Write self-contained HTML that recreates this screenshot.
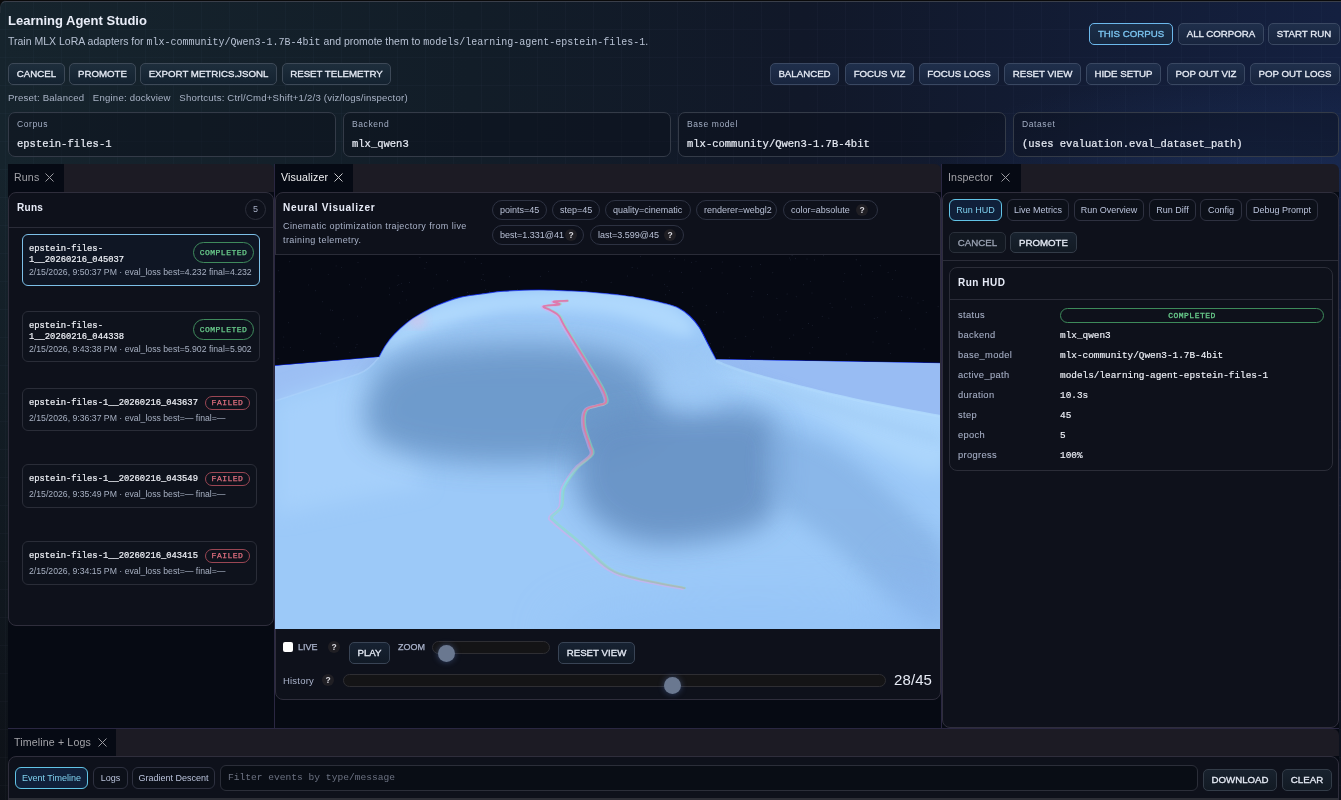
<!DOCTYPE html>
<html><head><meta charset="utf-8">
<style>
*{box-sizing:border-box;margin:0;padding:0}
html,body{width:1341px;height:800px;overflow:hidden;background:#0a0a0b;font-family:"Liberation Sans",sans-serif;color:#dfe5f2}
.abs{position:absolute}
#app{position:absolute;left:0;top:0;width:1341px;height:800px;border-top-left-radius:7px;overflow:hidden;
 background:
  linear-gradient(180deg, rgba(10,12,18,0) 0%, rgba(10,12,18,0) 20%, rgba(12,14,20,.85) 100%),
  radial-gradient(ellipse 320px 90px at 1250px 165px, rgba(40,70,130,.28), rgba(40,70,130,0)),
  linear-gradient(90deg,#16242d 0%,#121d28 35%,#111829 60%,#142040 100%);}
#grid{position:absolute;inset:0;background-image:
  linear-gradient(90deg,rgba(150,180,220,.028) 1px,transparent 1px),
  linear-gradient(180deg,rgba(150,180,220,.028) 1px,transparent 1px);
  background-size:28px 28px;background-position:5px 1px}
.title{position:absolute;left:8px;top:13px;font-weight:bold;font-size:13px;color:#e9edf8;letter-spacing:0}
.sub{position:absolute;left:8px;top:35px;font-size:10.5px;color:#b6c0d2;white-space:pre}
.mono{font-family:"Liberation Mono",monospace}
.btn{position:absolute;height:22px;border:1px solid #3d4957;border-radius:5px;background:linear-gradient(180deg,#1e2e3c,#142230);
 color:#e6ebf5;font-size:9.7px;-webkit-text-stroke:.3px currentColor;line-height:20px;text-align:center;white-space:nowrap;letter-spacing:0}
.btn.nv{background:linear-gradient(180deg,#1f2f4b,#18253e);border-color:#3a4862}
.btn.sel{border-color:#6cb8ec;color:#7cc6f2;background:linear-gradient(180deg,#1b2e48,#16263e)}
.meta{position:absolute;left:8px;top:92px;font-size:9.6px;color:#a9b3c6;white-space:pre;letter-spacing:.2px}
.field{position:absolute;top:112px;height:45px;border:1px solid #343b48;border-radius:7px;background:rgba(10,15,26,.45)}
.field .lbl{position:absolute;left:8px;top:6px;font-size:8.5px;color:#a3aec4;letter-spacing:.6px}
.field .val{position:absolute;left:8px;top:24.5px;font-family:"Liberation Mono",monospace;font-size:10.5px;color:#e6eaf3;-webkit-text-stroke:.2px currentColor}

.tabbar{position:absolute;height:28px;background:#1c1b24;border-top-right-radius:6px}
.tab{position:absolute;top:0;height:28px;background:#060a14;font-size:10.6px;color:#a3a3a8;letter-spacing:.15px;white-space:nowrap}
.tab span{position:absolute;left:6px;top:6.5px}
.tab.act{color:#f2f2f4}
.xic{position:absolute;top:9px;width:9px;height:9px}
.sash{position:absolute;background:#2a2742}
.card{position:absolute;background:#0e111b;border:1px solid #2f2e3c;border-radius:8px}
.dockbg{position:absolute;background:#060a13}
.hdrttl{position:absolute;font-weight:bold;font-size:10px;color:#e8ecf8;letter-spacing:.7px}
.divh{position:absolute;height:1px;background:#2a2c38}
.item{position:absolute;border:1px solid #2a2d38;border-radius:6px;background:#0e121c}
.item.sel{border-color:#7dc0e8;background:#0f1624}
.iname{position:absolute;left:6px;font-family:"Liberation Mono",monospace;font-size:8.8px;color:#eef0f6;line-height:11px;-webkit-text-stroke:.2px currentColor;white-space:pre}
.idate{position:absolute;left:6px;font-size:8.7px;color:#a7b0c2;white-space:pre}
.badge{position:absolute;height:21px;border:1px solid #3f8a5c;border-radius:11px;font-family:"Liberation Mono",monospace;font-size:8px;letter-spacing:.5px;color:#6bd08e;text-align:center;line-height:19px;-webkit-text-stroke:.25px currentColor}
.badge.f{height:14px;border-color:#9a4653;color:#e06f7f;line-height:12px;border-radius:8px}
.pill{position:absolute;height:20px;border:1px solid #2d3242;border-radius:10px;font-size:9px;color:#b9c1d6;line-height:18px;white-space:nowrap;padding-left:7px}
.q{position:absolute;width:12px;height:12px;border-radius:6px;background:#201f24;color:#d8d8de;font-size:8.5px;font-weight:bold;text-align:center;line-height:12px}
.itab{position:absolute;top:199px;height:22px;border:1px solid #2e3140;border-radius:6px;font-size:9px;color:#b9c2da;text-align:center;line-height:20px;white-space:nowrap;background:#0c1019}
.itab.sel{border-color:#62c4e6;color:#7fd0ee;background:#10203a}
.hl{position:absolute;left:958px;font-size:9.3px;color:#a4adc3;letter-spacing:.35px;-webkit-text-stroke:.1px currentColor}
.hv{position:absolute;left:1060px;font-family:"Liberation Mono",monospace;font-size:9.4px;color:#eef1f8;-webkit-text-stroke:.15px currentColor}
</style></head><body>
<div id="app" style="will-change:transform"><div id="grid"></div><div class="abs" style="left:0;top:0;width:1341px;height:1px;background:#0a0a0b"></div><div class="abs" style="left:0;top:1px;width:1341px;height:12px;border-top:1px solid #3a3f4a;border-left:1px solid rgba(58,63,74,.35);border-top-left-radius:6px"></div>
<div class="title">Learning Agent Studio</div>
<div class="sub">Train MLX LoRA adapters for <span class="mono" style="font-size:10px">mlx-community/Qwen3-1.7B-4bit</span> and promote them to <span class="mono" style="font-size:10px">models/learning-agent-epstein-files-1</span>.</div>

<div class="btn nv sel" style="left:1089px;top:23px;width:84px">THIS CORPUS</div>
<div class="btn nv" style="left:1178px;top:23px;width:86px">ALL CORPORA</div>
<div class="btn nv" style="left:1268px;top:23px;width:72px">START RUN</div>

<div class="btn" style="left:8px;top:63px;width:57px">CANCEL</div>
<div class="btn" style="left:69px;top:63px;width:67px">PROMOTE</div>
<div class="btn" style="left:140px;top:63px;width:137px">EXPORT METRICS.JSONL</div>
<div class="btn" style="left:282px;top:63px;width:109px">RESET TELEMETRY</div>

<div class="btn nv" style="left:770px;top:63px;width:69px">BALANCED</div>
<div class="btn nv" style="left:845px;top:63px;width:69px">FOCUS VIZ</div>
<div class="btn nv" style="left:919px;top:63px;width:80px">FOCUS LOGS</div>
<div class="btn nv" style="left:1004px;top:63px;width:77px">RESET VIEW</div>
<div class="btn nv" style="left:1086px;top:63px;width:75px">HIDE SETUP</div>
<div class="btn nv" style="left:1167px;top:63px;width:78px">POP OUT VIZ</div>
<div class="btn nv" style="left:1250px;top:63px;width:90px">POP OUT LOGS</div>

<div class="meta">Preset: Balanced   Engine: dockview   Shortcuts: Ctrl/Cmd+Shift+1/2/3 (viz/logs/inspector)</div>

<div class="field" style="left:8px;width:328px"><div class="lbl">Corpus</div><div class="val">epstein-files-1</div></div>
<div class="field" style="left:343px;width:328px"><div class="lbl">Backend</div><div class="val">mlx_qwen3</div></div>
<div class="field" style="left:678px;width:328px"><div class="lbl">Base model</div><div class="val">mlx-community/Qwen3-1.7B-4bit</div></div>
<div class="field" style="left:1013px;width:326px"><div class="lbl">Dataset</div><div class="val">(uses evaluation.eval_dataset_path)</div></div>

<!-- DOCK -->

<!-- dock bg -->
<div class="dockbg" style="left:8px;top:192px;width:1331px;height:608px"></div>
<!-- Runs group -->
<div class="tabbar" style="left:8px;top:164px;width:266px"></div>
<div class="tab" style="left:8px;top:164px;width:56px"><span>Runs</span><svg class="xic" style="left:37px" viewBox="0 0 9 9"><path d="M0.5 0.5L8.5 8.5M8.5 0.5L0.5 8.5" stroke="#9a9aa0" stroke-width="1"/></svg></div>
<div class="card" style="left:8px;top:192px;width:266px;height:434px;border-bottom-left-radius:8px"></div>
<div class="hdrttl" style="left:17px;top:202px;letter-spacing:.3px">Runs</div>
<div class="abs" style="left:245px;top:199px;width:21px;height:21px;border:1px solid #2c2f3b;border-radius:50%;font-size:9px;color:#a6aec4;text-align:center;line-height:19px">5</div>
<div class="divh" style="left:9px;top:227px;width:264px"></div>

<div class="item sel" style="left:22px;top:234px;width:238px;height:52px"><div class="iname" style="top:9px">epstein-files-
1__20260216_045037</div><div class="idate" style="top:32px">2/15/2026, 9:50:37 PM · eval_loss best=4.232 final=4.232</div>
<div class="badge" style="left:170px;top:7px;width:61px">COMPLETED</div></div>

<div class="item" style="left:22px;top:311px;width:238px;height:51px"><div class="iname" style="top:9px">epstein-files-
1__20260216_044338</div><div class="idate" style="top:32px">2/15/2026, 9:43:38 PM · eval_loss best=5.902 final=5.902</div>
<div class="badge" style="left:170px;top:7px;width:61px">COMPLETED</div></div>

<div class="item" style="left:22px;top:388px;width:235px;height:43px"><div class="iname" style="top:9px">epstein-files-1__20260216_043637</div><div class="idate" style="top:24px">2/15/2026, 9:36:37 PM · eval_loss best=— final=—</div>
<div class="badge f" style="left:182px;top:7px;width:45px">FAILED</div></div>

<div class="item" style="left:22px;top:464px;width:235px;height:44px"><div class="iname" style="top:9px">epstein-files-1__20260216_043549</div><div class="idate" style="top:24px">2/15/2026, 9:35:49 PM · eval_loss best=— final=—</div>
<div class="badge f" style="left:182px;top:7px;width:45px">FAILED</div></div>

<div class="item" style="left:22px;top:541px;width:235px;height:44px"><div class="iname" style="top:9px">epstein-files-1__20260216_043415</div><div class="idate" style="top:24px">2/15/2026, 9:34:15 PM · eval_loss best=— final=—</div>
<div class="badge f" style="left:182px;top:7px;width:45px">FAILED</div></div>

<div class="sash" style="left:274px;top:164px;width:1px;height:564px"></div>

<!-- Visualizer group -->
<div class="tabbar" style="left:275px;top:164px;width:666px"></div>
<div class="tab act" style="left:275px;top:164px;width:78px"><span>Visualizer</span><svg class="xic" style="left:59px" viewBox="0 0 9 9"><path d="M0.5 0.5L8.5 8.5M8.5 0.5L0.5 8.5" stroke="#c8c8cc" stroke-width="1"/></svg></div>
<div class="card" style="left:275px;top:192px;width:666px;height:508px"></div>
<div class="hdrttl" style="left:283px;top:202px">Neural Visualizer</div>
<div class="abs" style="left:283px;top:219px;font-size:9px;letter-spacing:.4px;color:#a9b2c8;line-height:14px;width:200px">Cinematic optimization trajectory from live training telemetry.</div>
<div class="pill" style="left:492px;top:200px;width:55px">points=45</div>
<div class="pill" style="left:552px;top:200px;width:48px">step=45</div>
<div class="pill" style="left:605px;top:200px;width:86px">quality=cinematic</div>
<div class="pill" style="left:696px;top:200px;width:81px">renderer=webgl2</div>
<div class="pill" style="left:783px;top:200px;width:95px">color=absolute<div class="q" style="left:72px;top:3px">?</div></div>
<div class="pill" style="left:492px;top:225px;width:92px">best=1.331@41<div class="q" style="left:72px;top:3px">?</div></div>
<div class="pill" style="left:590px;top:225px;width:94px">last=3.599@45<div class="q" style="left:73px;top:3px">?</div></div>
<div class="divh" style="left:276px;top:254px;width:664px"></div>
<div id="canvas" class="abs" style="left:275px;top:255px;width:665px;height:374px;background:#060913;overflow:hidden"><svg width="666" height="374" viewBox="0 0 666 374" style="position:absolute;left:0;top:0">
<defs>
<filter id="b6" x="-50%" y="-50%" width="200%" height="200%"><feGaussianBlur stdDeviation="6"/></filter>
<filter id="b10" x="-50%" y="-50%" width="200%" height="200%"><feGaussianBlur stdDeviation="10"/></filter>
<filter id="b12" x="-50%" y="-50%" width="200%" height="200%"><feGaussianBlur stdDeviation="12"/></filter>
<filter id="b14" x="-50%" y="-50%" width="200%" height="200%"><feGaussianBlur stdDeviation="14"/></filter>
<filter id="b16" x="-50%" y="-50%" width="200%" height="200%"><feGaussianBlur stdDeviation="16"/></filter>
<filter id="b24" x="-50%" y="-50%" width="200%" height="200%"><feGaussianBlur stdDeviation="24"/></filter>
<filter id="b1"><feGaussianBlur stdDeviation="0.6"/></filter>
<linearGradient id="trg" x1="0" y1="0" x2="0" y2="1">
 <stop offset="0" stop-color="#e86aa8"/><stop offset="0.5" stop-color="#e07a9e"/><stop offset="0.62" stop-color="#86dce8"/><stop offset="0.85" stop-color="#92d0dc"/><stop offset="1" stop-color="#aab4b8"/>
</linearGradient>
<clipPath id="tc"><path d="M0,110.7 L104,102  C105.1,100.0 108.1,94.0 110.7,90.2 C113.3,86.4 116.1,82.8 119.7,79.0 C123.3,75.2 127.8,71.1 132.1,67.7 C136.4,64.3 140.5,61.6 145.6,58.7 C150.7,55.8 155.9,53.0 162.5,50.3 C169.1,47.6 177.9,44.2 185.0,42.4 C192.1,40.6 197.7,40.3 205.0,39.3 C212.3,38.3 219.1,37.0 228.9,36.3 C238.7,35.6 252.1,35.0 264.0,35.0 C275.9,35.0 290.4,35.8 300.5,36.3 C310.6,36.8 316.4,37.4 324.3,38.1 C332.2,38.8 341.0,39.6 348.2,40.5 C355.4,41.4 360.5,42.2 367.5,43.6 C374.5,45.0 384.0,47.0 390.0,48.6 C396.0,50.2 399.4,50.9 403.5,53.0 C407.6,55.1 411.3,57.8 414.7,61.0 C418.1,64.2 421.1,67.7 424.0,72.0 C426.9,76.3 429.2,81.6 432.0,87.0 C434.8,92.4 439.5,101.6 441.0,104.5 L666,108.2 L666,374 L0,374 Z"/></clipPath>
</defs>
<rect width="666" height="374" fill="#060913"/>
<circle cx="158.5" cy="59.9" r="0.45" fill="#2a3044" /><circle cx="246.4" cy="66.4" r="0.45" fill="#2a3044" /><circle cx="416.7" cy="7.2" r="0.45" fill="#2a3044" /><circle cx="8.8" cy="92.1" r="0.45" fill="#2a3044" /><circle cx="172.7" cy="25.8" r="0.45" fill="#2a3044" /><circle cx="663.1" cy="51.7" r="0.45" fill="#2a3044" /><circle cx="557.1" cy="52.4" r="0.45" fill="#2a3044" /><circle cx="425.6" cy="16.6" r="0.45" fill="#2a3044" /><circle cx="422.8" cy="95.5" r="0.45" fill="#2a3044" /><circle cx="348.4" cy="81.5" r="0.45" fill="#2a3044" /><circle cx="447.2" cy="7.0" r="0.45" fill="#2a3044" /><circle cx="505.0" cy="65.0" r="0.45" fill="#2a3044" /><circle cx="200.6" cy="3.4" r="0.45" fill="#2a3044" /><circle cx="576.4" cy="52.0" r="0.45" fill="#2a3044" /><circle cx="478.7" cy="96.7" r="0.45" fill="#2a3044" /><circle cx="475.6" cy="101.3" r="0.45" fill="#2a3044" /><circle cx="263.0" cy="88.1" r="0.45" fill="#2a3044" /><circle cx="296.1" cy="102.9" r="0.45" fill="#2a3044" /><circle cx="585.3" cy="10.7" r="0.45" fill="#2a3044" /><circle cx="90.6" cy="23.9" r="0.45" fill="#2a3044" /><circle cx="643.0" cy="48.0" r="0.45" fill="#2a3044" /><circle cx="417.3" cy="33.1" r="0.45" fill="#2a3044" /><circle cx="337.8" cy="42.4" r="0.45" fill="#2a3044" /><circle cx="233.7" cy="64.4" r="0.45" fill="#2a3044" /><circle cx="389.1" cy="99.5" r="0.45" fill="#2a3044" /><circle cx="454.2" cy="102.2" r="0.45" fill="#2a3044" /><circle cx="570.4" cy="109.0" r="0.45" fill="#2a3044" /><circle cx="447.1" cy="17.9" r="0.45" fill="#2a3044" /><circle cx="573.2" cy="106.1" r="0.45" fill="#2a3044" /><circle cx="602.5" cy="62.6" r="0.45" fill="#2a3044" /><circle cx="475.4" cy="23.2" r="0.45" fill="#2a3044" /><circle cx="553.9" cy="63.1" r="0.45" fill="#2a3044" /><circle cx="189.8" cy="7.0" r="0.45" fill="#2a3044" /><circle cx="568.7" cy="108.9" r="0.45" fill="#2a3044" /><circle cx="59.0" cy="88.1" r="0.45" fill="#2a3044" /><circle cx="273.4" cy="16.6" r="0.45" fill="#2a3044" /><circle cx="195.7" cy="84.6" r="0.45" fill="#2a3044" /><circle cx="581.3" cy="4.9" r="0.45" fill="#2a3044" /><circle cx="409.3" cy="4.9" r="0.45" fill="#2a3044" /><circle cx="478.5" cy="36.4" r="0.45" fill="#2a3044" /><circle cx="586.7" cy="107.9" r="0.45" fill="#2a3044" /><circle cx="336.6" cy="109.8" r="0.45" fill="#2a3044" /><circle cx="206.2" cy="8.5" r="0.45" fill="#2a3044" /><circle cx="399.4" cy="3.5" r="0.45" fill="#2a3044" /><circle cx="131.5" cy="44.9" r="0.45" fill="#2a3044" /><circle cx="406.6" cy="17.2" r="0.45" fill="#2a3044" /><circle cx="28.3" cy="95.5" r="0.45" fill="#2a3044" /><circle cx="209.0" cy="105.5" r="0.45" fill="#2a3044" /><circle cx="597.2" cy="41.6" r="0.45" fill="#2a3044" /><circle cx="306.6" cy="57.2" r="0.45" fill="#2a3044" /><circle cx="428.8" cy="65.5" r="0.45" fill="#2a3044" /><circle cx="372.5" cy="68.2" r="0.45" fill="#2a3044" /><circle cx="626.5" cy="55.8" r="0.45" fill="#2a3044" /><circle cx="287.2" cy="79.2" r="0.45" fill="#2a3044" /><circle cx="158.3" cy="33.1" r="0.45" fill="#2a3044" /><circle cx="651.2" cy="57.3" r="0.45" fill="#2a3044" /><circle cx="365.3" cy="1.3" r="0.45" fill="#2a3044" /><circle cx="276.5" cy="63.8" r="0.45" fill="#2a3044" /><circle cx="13.4" cy="67.7" r="0.45" fill="#2a3044" /><circle cx="421.0" cy="6.6" r="0.45" fill="#2a3044" /><circle cx="417.8" cy="51.3" r="0.45" fill="#2a3044" /><circle cx="452.4" cy="38.8" r="0.45" fill="#2a3044" /><circle cx="470.8" cy="81.2" r="0.45" fill="#2a3044" /><circle cx="14.8" cy="6.7" r="0.45" fill="#2a3044" /><circle cx="450.2" cy="106.0" r="0.45" fill="#2a3044" /><circle cx="167.2" cy="50.2" r="0.45" fill="#2a3044" /><circle cx="394.7" cy="35.2" r="0.45" fill="#2a3044" /><circle cx="242.4" cy="34.4" r="0.45" fill="#2a3044" /><circle cx="245.9" cy="65.5" r="0.45" fill="#2a3044" /><circle cx="200.1" cy="41.5" r="0.45" fill="#2a3044" /><circle cx="514.3" cy="3.0" r="0.45" fill="#2a3044" /><circle cx="379.1" cy="80.9" r="0.45" fill="#2a3044" /><circle cx="206.5" cy="24.5" r="0.45" fill="#2a3044" /><circle cx="535.3" cy="26.3" r="0.45" fill="#2a3044" /><circle cx="124.8" cy="47.9" r="0.45" fill="#2a3044" /><circle cx="464.9" cy="11.2" r="0.45" fill="#2a3044" /><circle cx="214.4" cy="36.7" r="0.45" fill="#2a3044" /><circle cx="555.1" cy="48.2" r="0.45" fill="#2a3044" /><circle cx="569.8" cy="18.6" r="0.45" fill="#2a3044" /><circle cx="224.2" cy="71.5" r="0.45" fill="#2a3044" /><circle cx="589.3" cy="49.6" r="0.45" fill="#2a3044" /><circle cx="149.9" cy="13.3" r="0.45" fill="#2a3044" /><circle cx="352.7" cy="21.0" r="0.45" fill="#2a3044" /><circle cx="537.3" cy="92.2" r="0.45" fill="#2a3044" /><circle cx="122.3" cy="30.6" r="0.45" fill="#2a3044" /><circle cx="537.6" cy="70.6" r="0.45" fill="#2a3044" /><circle cx="537.0" cy="38.0" r="0.45" fill="#2a3044" /><circle cx="86.4" cy="32.1" r="0.45" fill="#2a3044" /><circle cx="528.7" cy="29.8" r="0.45" fill="#2a3044" /><circle cx="230.7" cy="45.9" r="0.45" fill="#2a3044" /><circle cx="279.6" cy="45.0" r="0.45" fill="#2a3044" /><circle cx="613.1" cy="17.2" r="0.45" fill="#2a3044" /><circle cx="3.1" cy="103.8" r="0.45" fill="#2a3044" /><circle cx="586.1" cy="108.6" r="0.45" fill="#2a3044" /><circle cx="289.3" cy="104.5" r="0.45" fill="#2a3044" /><circle cx="617.6" cy="24.4" r="0.45" fill="#2a3044" /><circle cx="496.5" cy="92.0" r="0.45" fill="#2a3044" /><circle cx="441.5" cy="57.1" r="0.45" fill="#2a3044" /><circle cx="192.5" cy="37.5" r="0.45" fill="#2a3044" /><circle cx="151.5" cy="7.5" r="0.45" fill="#2a3044" /><circle cx="392.1" cy="31.6" r="0.45" fill="#2a3044" /><circle cx="539.6" cy="5.0" r="0.45" fill="#2a3044" /><circle cx="601.8" cy="76.3" r="0.45" fill="#2a3044" /><circle cx="615.3" cy="98.6" r="0.45" fill="#2a3044" /><circle cx="599.2" cy="63.5" r="0.45" fill="#2a3044" /><circle cx="8.8" cy="82.0" r="0.45" fill="#2a3044" /><circle cx="114.4" cy="33.0" r="0.45" fill="#2a3044" /><circle cx="441.5" cy="57.7" r="0.45" fill="#2a3044" /><circle cx="275.6" cy="103.3" r="0.45" fill="#2a3044" /><circle cx="407.7" cy="37.5" r="0.45" fill="#2a3044" /><circle cx="168.1" cy="94.8" r="0.45" fill="#2a3044" /><circle cx="317.8" cy="86.1" r="0.45" fill="#2a3044" /><circle cx="234.3" cy="21.7" r="0.45" fill="#2a3044" /><circle cx="356.1" cy="89.8" r="0.45" fill="#2a3044" /><circle cx="114.1" cy="87.1" r="0.45" fill="#2a3044" /><circle cx="613.9" cy="88.7" r="0.45" fill="#2a3044" /><circle cx="548.5" cy="0.8" r="0.45" fill="#2a3044" /><circle cx="418.7" cy="94.9" r="0.45" fill="#2a3044" /><circle cx="33.3" cy="29.9" r="0.45" fill="#2a3044" /><circle cx="178.9" cy="58.0" r="0.45" fill="#2a3044" /><circle cx="281.7" cy="52.0" r="0.45" fill="#2a3044" /><circle cx="517.1" cy="0.2" r="0.45" fill="#2a3044" /><circle cx="36.5" cy="14.0" r="0.45" fill="#2a3044" /><circle cx="83.0" cy="7.5" r="0.45" fill="#2a3044" /><circle cx="649.1" cy="94.0" r="0.45" fill="#2a3044" /><circle cx="57.4" cy="55.2" r="0.45" fill="#2a3044" /><circle cx="210.4" cy="34.6" r="0.45" fill="#2a3044" /><circle cx="234.0" cy="71.2" r="0.45" fill="#2a3044" /><circle cx="390.7" cy="39.7" r="0.45" fill="#2a3044" /><circle cx="127.3" cy="36.2" r="0.45" fill="#2a3044" /><circle cx="82.4" cy="61.1" r="0.45" fill="#2a3044" /><circle cx="476.9" cy="41.8" r="0.45" fill="#2a3044" /><circle cx="53.2" cy="19.6" r="0.45" fill="#2a3044" /><circle cx="248.6" cy="66.5" r="0.45" fill="#2a3044" /><circle cx="521.2" cy="41.8" r="0.45" fill="#2a3044" /><circle cx="533.6" cy="68.5" r="0.45" fill="#2a3044" /><circle cx="287.4" cy="41.0" r="0.45" fill="#2a3044" /><circle cx="330.4" cy="77.3" r="0.45" fill="#2a3044" /><circle cx="280.1" cy="76.4" r="0.45" fill="#2a3044" /><circle cx="306.9" cy="27.0" r="0.45" fill="#2a3044" /><circle cx="356.9" cy="76.5" r="0.45" fill="#2a3044" /><circle cx="47.7" cy="46.7" r="0.45" fill="#2a3044" /><circle cx="283.6" cy="96.8" r="0.45" fill="#2a3044" /><circle cx="623.7" cy="41.2" r="0.45" fill="#2a3044" /><circle cx="598.0" cy="87.0" r="0.45" fill="#2a3044" /><circle cx="174.6" cy="51.1" r="0.45" fill="#2a3044" /><circle cx="82.0" cy="89.5" r="0.45" fill="#2a3044" /><circle cx="441.1" cy="97.6" r="0.45" fill="#2a3044" /><circle cx="527.8" cy="73.4" r="0.45" fill="#2a3044" /><circle cx="488.7" cy="62.0" r="0.45" fill="#2a3044" /><circle cx="68.7" cy="64.7" r="0.45" fill="#2a3044" /><circle cx="3.3" cy="15.8" r="0.45" fill="#2a3044" /><circle cx="515.7" cy="4.9" r="0.45" fill="#2a3044" /><circle cx="61.1" cy="10.9" r="0.45" fill="#2a3044" /><circle cx="586.4" cy="19.7" r="0.45" fill="#2a3044" /><circle cx="15.6" cy="92.6" r="0.45" fill="#2a3044" /><circle cx="80.8" cy="92.8" r="0.45" fill="#2a3044" /><circle cx="448.6" cy="92.0" r="0.45" fill="#2a3044" /><circle cx="634.3" cy="63.7" r="0.45" fill="#2a3044" /><circle cx="532.0" cy="4.0" r="0.45" fill="#2a3044" /><circle cx="511.1" cy="56.2" r="0.45" fill="#2a3044" /><circle cx="476.3" cy="11.7" r="0.45" fill="#2a3044" /><circle cx="498.8" cy="102.8" r="0.45" fill="#2a3044" /><circle cx="40.7" cy="35.7" r="0.45" fill="#2a3044" /><circle cx="375.6" cy="91.1" r="0.45" fill="#2a3044" /><circle cx="161.3" cy="19.8" r="0.45" fill="#2a3044" /><circle cx="166.5" cy="67.8" r="0.45" fill="#2a3044" /><circle cx="501.9" cy="43.3" r="0.45" fill="#2a3044" /><circle cx="244.7" cy="43.6" r="0.45" fill="#2a3044" /><circle cx="233.3" cy="46.0" r="0.45" fill="#2a3044" /><circle cx="55.5" cy="55.0" r="0.45" fill="#2a3044" /><circle cx="648.1" cy="45.4" r="0.45" fill="#2a3044" /><circle cx="497.8" cy="17.7" r="0.45" fill="#2a3044" /><circle cx="460.1" cy="83.2" r="0.45" fill="#2a3044" /><circle cx="448.8" cy="56.9" r="0.45" fill="#2a3044" /><circle cx="322.2" cy="70.7" r="0.45" fill="#2a3044" /><circle cx="597.7" cy="16.4" r="0.45" fill="#2a3044" /><circle cx="63.8" cy="82.3" r="0.45" fill="#2a3044" /><circle cx="610.5" cy="56.9" r="0.45" fill="#2a3044" /><circle cx="295.1" cy="79.1" r="0.45" fill="#2a3044" /><circle cx="123.9" cy="29.4" r="0.45" fill="#2a3044" /><circle cx="132.7" cy="64.4" r="0.45" fill="#2a3044" /><circle cx="209.7" cy="25.6" r="0.45" fill="#2a3044" /><circle cx="460.3" cy="104.9" r="0.45" fill="#2a3044" /><circle cx="197.0" cy="77.6" r="0.45" fill="#2a3044" /><circle cx="275.2" cy="93.9" r="0.45" fill="#2a3044" /><circle cx="389.4" cy="29.4" r="0.45" fill="#2a3044" /><circle cx="144.9" cy="2.5" r="0.45" fill="#2a3044" /><circle cx="319.3" cy="42.1" r="0.45" fill="#2a3044" /><circle cx="114.7" cy="39.7" r="0.45" fill="#2a3044" /><circle cx="214.5" cy="85.2" r="0.45" fill="#2a3044" /><circle cx="95.6" cy="109.0" r="0.45" fill="#2a3044" /><circle cx="319.4" cy="65.9" r="0.45" fill="#2a3044" /><circle cx="311.7" cy="91.8" r="0.45" fill="#2a3044" /><circle cx="547.2" cy="61.3" r="0.45" fill="#2a3044" /><circle cx="320.5" cy="79.3" r="0.45" fill="#2a3044" /><circle cx="570.5" cy="44.0" r="0.45" fill="#2a3044" /><circle cx="488.6" cy="105.6" r="0.45" fill="#2a3044" /><circle cx="311.3" cy="25.3" r="0.45" fill="#2a3044" /><circle cx="156.4" cy="78.9" r="0.45" fill="#2a3044" /><circle cx="449.8" cy="105.5" r="0.45" fill="#2a3044" /><circle cx="568.7" cy="26.6" r="0.45" fill="#2a3044" /><circle cx="126.3" cy="28.4" r="0.45" fill="#2a3044" /><circle cx="124.7" cy="77.5" r="0.45" fill="#2a3044" /><circle cx="571.8" cy="99.0" r="0.45" fill="#2a3044" /><circle cx="169.8" cy="95.2" r="0.45" fill="#2a3044" /><circle cx="208.7" cy="46.6" r="0.45" fill="#2a3044" /><circle cx="485.5" cy="9.5" r="0.45" fill="#2a3044" /><circle cx="61.7" cy="91.7" r="0.45" fill="#2a3044" /><circle cx="194.3" cy="39.2" r="0.45" fill="#2a3044" /><circle cx="386.5" cy="74.3" r="0.45" fill="#2a3044" /><circle cx="4.6" cy="36.8" r="0.45" fill="#2a3044" /><circle cx="290.5" cy="53.4" r="0.45" fill="#2a3044" /><circle cx="139.9" cy="64.4" r="0.45" fill="#2a3044" /><circle cx="636.3" cy="43.0" r="0.45" fill="#2a3044" /><circle cx="362.5" cy="13.1" r="0.45" fill="#2a3044" /><circle cx="183.0" cy="73.2" r="0.45" fill="#2a3044" /><circle cx="74.9" cy="97.6" r="0.45" fill="#2a3044" /><circle cx="605.2" cy="10.7" r="0.45" fill="#2a3044" /><circle cx="626.9" cy="41.2" r="0.45" fill="#2a3044" /><circle cx="514.4" cy="83.3" r="0.45" fill="#2a3044" /><circle cx="196.8" cy="74.3" r="0.45" fill="#2a3044" /><circle cx="435.6" cy="88.7" r="0.45" fill="#2a3044" /><circle cx="176.9" cy="83.0" r="0.45" fill="#2a3044" /><circle cx="640.2" cy="74.0" r="0.45" fill="#2a3044" /><circle cx="357.1" cy="12.5" r="0.45" fill="#2a3044" /><circle cx="328.9" cy="38.7" r="0.45" fill="#2a3044" /><circle cx="478.3" cy="74.6" r="0.45" fill="#2a3044" /><circle cx="377.2" cy="20.0" r="0.45" fill="#2a3044" /><circle cx="430.0" cy="69.4" r="0.45" fill="#2a3044" /><circle cx="119.3" cy="97.9" r="0.45" fill="#2a3044" /><circle cx="436.5" cy="13.5" r="0.45" fill="#2a3044" /><circle cx="620.6" cy="15.6" r="0.45" fill="#2a3044" /><circle cx="220.8" cy="79.3" r="0.45" fill="#2a3044" /><circle cx="397.9" cy="61.0" r="0.45" fill="#2a3044" /><circle cx="431.2" cy="50.3" r="0.45" fill="#2a3044" /><circle cx="208.1" cy="19.4" r="0.45" fill="#2a3044" /><circle cx="45.7" cy="78.7" r="0.45" fill="#2a3044" /><circle cx="502.5" cy="59.7" r="0.45" fill="#2a3044" /><circle cx="492.6" cy="39.5" r="0.45" fill="#2a3044" /><circle cx="177.1" cy="42.2" r="0.45" fill="#2a3044" /><circle cx="581.1" cy="4.6" r="0.45" fill="#2a3044" /><circle cx="336.1" cy="27.2" r="0.45" fill="#2a3044" /><circle cx="512.1" cy="39.0" r="0.45" fill="#2a3044" /><circle cx="221.7" cy="44.4" r="0.45" fill="#2a3044" /><circle cx="360.6" cy="84.9" r="0.45" fill="#2a3044" /><circle cx="235.0" cy="93.2" r="0.45" fill="#2a3044" /><circle cx="74.7" cy="29.8" r="0.45" fill="#2a3044" /><circle cx="66.4" cy="12.4" r="0.45" fill="#2a3044" /><circle cx="518.8" cy="80.0" r="0.45" fill="#2a3044" /><circle cx="123.1" cy="20.8" r="0.45" fill="#2a3044" /><circle cx="277.5" cy="81.8" r="0.45" fill="#2a3044" /><circle cx="543.3" cy="82.4" r="0.45" fill="#2a3044" /><circle cx="394.2" cy="16.1" r="0.45" fill="#2a3044" /><circle cx="265.3" cy="21.3" r="0.45" fill="#2a3044" /><circle cx="351.4" cy="62.5" r="0.45" fill="#2a3044" /><circle cx="134.6" cy="27.5" r="0.45" fill="#2a3044" /><circle cx="520.6" cy="3.3" r="0.45" fill="#2a3044" /><circle cx="534.9" cy="98.0" r="0.45" fill="#2a3044" /><circle cx="632.2" cy="42.1" r="0.45" fill="#2a3044" />
<path d="M0,110.7 L104,102  C105.1,100.0 108.1,94.0 110.7,90.2 C113.3,86.4 116.1,82.8 119.7,79.0 C123.3,75.2 127.8,71.1 132.1,67.7 C136.4,64.3 140.5,61.6 145.6,58.7 C150.7,55.8 155.9,53.0 162.5,50.3 C169.1,47.6 177.9,44.2 185.0,42.4 C192.1,40.6 197.7,40.3 205.0,39.3 C212.3,38.3 219.1,37.0 228.9,36.3 C238.7,35.6 252.1,35.0 264.0,35.0 C275.9,35.0 290.4,35.8 300.5,36.3 C310.6,36.8 316.4,37.4 324.3,38.1 C332.2,38.8 341.0,39.6 348.2,40.5 C355.4,41.4 360.5,42.2 367.5,43.6 C374.5,45.0 384.0,47.0 390.0,48.6 C396.0,50.2 399.4,50.9 403.5,53.0 C407.6,55.1 411.3,57.8 414.7,61.0 C418.1,64.2 421.1,67.7 424.0,72.0 C426.9,76.3 429.2,81.6 432.0,87.0 C434.8,92.4 439.5,101.6 441.0,104.5 L666,108.2 L666,374 L0,374 Z" fill="#9cc9f8"/>
<path d="M0,110.7 L104,102  C105.1,100.0 108.1,94.0 110.7,90.2 C113.3,86.4 116.1,82.8 119.7,79.0 C123.3,75.2 127.8,71.1 132.1,67.7 C136.4,64.3 140.5,61.6 145.6,58.7 C150.7,55.8 155.9,53.0 162.5,50.3 C169.1,47.6 177.9,44.2 185.0,42.4 C192.1,40.6 197.7,40.3 205.0,39.3 C212.3,38.3 219.1,37.0 228.9,36.3 C238.7,35.6 252.1,35.0 264.0,35.0 C275.9,35.0 290.4,35.8 300.5,36.3 C310.6,36.8 316.4,37.4 324.3,38.1 C332.2,38.8 341.0,39.6 348.2,40.5 C355.4,41.4 360.5,42.2 367.5,43.6 C374.5,45.0 384.0,47.0 390.0,48.6 C396.0,50.2 399.4,50.9 403.5,53.0 C407.6,55.1 411.3,57.8 414.7,61.0 C418.1,64.2 421.1,67.7 424.0,72.0 C426.9,76.3 429.2,81.6 432.0,87.0 C434.8,92.4 439.5,101.6 441.0,104.5 L666,108.2" fill="none" stroke="#0a22e0" stroke-width="1.1"/>
<g clip-path="url(#tc)">
 <path d="M104,102 C150,70 250,60 441,104.5 L441,150 L104,150 Z" fill="#9ac4f1" filter="url(#b16)"/>
 <path d="M108.0,98.0 C104.7,96.3 118.0,76.7 130.0,68.0 C142.0,59.3 158.3,51.2 180.0,46.0 C201.7,40.8 233.3,38.5 260.0,37.0 C286.7,35.5 318.0,35.2 340.0,37.0 C362.0,38.8 379.0,42.2 392.0,48.0 C405.0,53.8 415.8,66.7 418.0,72.0 C420.2,77.3 419.7,82.3 405.0,80.0 C390.3,77.7 359.2,62.0 330.0,58.0 C300.8,54.0 260.0,52.7 230.0,56.0 C200.0,59.3 170.3,71.0 150.0,78.0 C129.7,85.0 111.3,99.7 108.0,98.0 Z" fill="#afd8fd" filter="url(#b6)"/>
 <path d="M445.0,108.0 C478.3,103.8 632.5,92.2 670.0,110.0 C707.5,127.8 680.0,200.0 670.0,215.0 C660.0,230.0 635.0,210.8 610.0,200.0 C585.0,189.2 543.3,160.8 520.0,150.0 C496.7,139.2 482.5,142.0 470.0,135.0 C457.5,128.0 411.7,112.2 445.0,108.0 Z" fill="#acd6fc" filter="url(#b10)"/>
 <path d="M441,104.5 L666,108.2 L666,160 C620,152 560,140 505,125 C470,116 452,110 441,104.5 Z" fill="#98bcf3" filter="url(#b1)"/>
 <path d="M441,106 C452,112 470,118 505,127 C560,142 620,154 666,162" stroke="#b2dafd" stroke-width="2" fill="none" filter="url(#b1)" opacity="0.7"/>
 <path d="M0,110.7 L104,102 C98,110 92,116 83,119 C55,128 25,138 0,146 Z" fill="#9cbff4" filter="url(#b1)"/>
 <path d="M83,119 C55,128 25,138 0,146 L0,260 L150,230 L110,130 Z" fill="#a6d0fb" filter="url(#b10)"/>
 <path d="M90.0,168.0 C87.0,156.5 91.7,136.3 100.0,125.0 C108.3,113.7 118.3,105.8 140.0,100.0 C161.7,94.2 203.3,91.3 230.0,90.0 C256.7,88.7 280.0,89.7 300.0,92.0 C320.0,94.3 337.0,97.3 350.0,104.0 C363.0,110.7 372.2,119.7 378.0,132.0 C383.8,144.3 393.0,166.3 385.0,178.0 C377.0,189.7 359.2,197.0 330.0,202.0 C300.8,207.0 245.3,209.3 210.0,208.0 C174.7,206.7 138.0,200.7 118.0,194.0 C98.0,187.3 93.0,179.5 90.0,168.0 Z" fill="#6a96c8" opacity="0.9" filter="url(#b14)"/>
 <path d="M318.0,168.0 C337.0,153.2 390.7,157.0 420.0,156.0 C449.3,155.0 480.2,150.0 494.0,162.0 C507.8,174.0 505.0,209.7 503.0,228.0 C501.0,246.3 503.8,262.0 482.0,272.0 C460.2,282.0 401.3,292.5 372.0,288.0 C342.7,283.5 315.0,265.0 306.0,245.0 C297.0,225.0 299.0,182.8 318.0,168.0 Z" fill="#6792c4" opacity="0.92" filter="url(#b14)"/>
 <ellipse cx="418" cy="128" rx="34" ry="22" fill="#9fcaf7" opacity="0.8" filter="url(#b12)"/>
 <path d="M500.0,178.0 C511.2,171.0 541.7,184.0 565.0,198.0 C588.3,212.0 622.5,245.0 640.0,262.0 C657.5,279.0 665.0,281.7 670.0,300.0 C675.0,318.3 677.5,363.3 670.0,372.0 C662.5,380.7 643.3,365.3 625.0,352.0 C606.7,338.7 581.2,310.7 560.0,292.0 C538.8,273.3 508.0,259.0 498.0,240.0 C488.0,221.0 488.8,185.0 500.0,178.0 Z" fill="#7ca8dc" opacity="0.55" filter="url(#b10)"/>
 <ellipse cx="650" cy="350" rx="40" ry="50" fill="#8ab6f2" opacity="0.4" filter="url(#b24)"/>
 <ellipse cx="480" cy="380" rx="200" ry="40" fill="#90c0f6" opacity="0.5" filter="url(#b24)"/>
 <path d="M104,102 C98,110 92,116 83,119 C55,128 25,138 0,146" stroke="#b0d6fc" stroke-width="1.5" fill="none" filter="url(#b1)" opacity="0.5"/>
 <path d="M441,105 C480,125 540,150 666,185" stroke="#88b2e6" stroke-width="3" fill="none" filter="url(#b6)" opacity="0.6"/>
 <ellipse cx="142" cy="66" rx="8" ry="5" fill="#f2b4dc" opacity="0.7" filter="url(#b6)"/>
</g>
<path d="M292.5,45.8 C290.2,45.9 279.8,45.9 278.5,46.5 C277.2,47.1 286.2,48.5 284.5,49.3 C282.8,50.1 269.9,50.3 268.5,51.3 C267.1,52.3 273.4,53.9 276.0,55.5 C278.6,57.1 281.7,58.2 284.0,61.0 C286.3,63.8 284.9,63.4 290.0,72.0 C295.1,80.6 308.3,101.8 314.7,112.4 C321.1,123.0 325.5,129.9 328.2,135.7 C330.9,141.5 332.0,144.9 331.0,147.3 C330.0,149.8 325.8,149.1 322.4,150.4 C319.0,151.7 313.0,151.6 310.8,155.0 C308.5,158.4 308.2,164.7 308.9,170.5 C309.5,176.3 313.4,185.1 314.7,189.9 C316.0,194.7 318.6,195.9 316.6,199.5 C314.6,203.1 306.5,207.6 303.0,211.2 C299.5,214.8 297.9,216.9 295.3,220.8 C292.7,224.7 289.2,229.2 287.6,234.4 C286.0,239.6 287.5,247.3 285.6,251.8 C283.7,256.3 277.0,258.9 276.0,261.5 C275.0,264.1 275.3,263.1 279.8,267.3 C284.3,271.5 294.0,278.9 303.0,286.6 C312.0,294.3 324.3,307.6 334.0,313.7 C343.7,319.8 348.5,320.2 361.1,323.4 C373.7,326.6 401.4,331.5 409.5,333.1" fill="none" stroke="#f0a0e8" stroke-width="3.2" opacity="0.45" transform="translate(-1,0.5)" filter="url(#b1)"/>
<path d="M292.5,45.8 C290.2,45.9 279.8,45.9 278.5,46.5 C277.2,47.1 286.2,48.5 284.5,49.3 C282.8,50.1 269.9,50.3 268.5,51.3 C267.1,52.3 273.4,53.9 276.0,55.5 C278.6,57.1 281.7,58.2 284.0,61.0 C286.3,63.8 284.9,63.4 290.0,72.0 C295.1,80.6 308.3,101.8 314.7,112.4 C321.1,123.0 325.5,129.9 328.2,135.7 C330.9,141.5 332.0,144.9 331.0,147.3 C330.0,149.8 325.8,149.1 322.4,150.4 C319.0,151.7 313.0,151.6 310.8,155.0 C308.5,158.4 308.2,164.7 308.9,170.5 C309.5,176.3 313.4,185.1 314.7,189.9 C316.0,194.7 318.6,195.9 316.6,199.5 C314.6,203.1 306.5,207.6 303.0,211.2 C299.5,214.8 297.9,216.9 295.3,220.8 C292.7,224.7 289.2,229.2 287.6,234.4 C286.0,239.6 287.5,247.3 285.6,251.8 C283.7,256.3 277.0,258.9 276.0,261.5 C275.0,264.1 275.3,263.1 279.8,267.3 C284.3,271.5 294.0,278.9 303.0,286.6 C312.0,294.3 324.3,307.6 334.0,313.7 C343.7,319.8 348.5,320.2 361.1,323.4 C373.7,326.6 401.4,331.5 409.5,333.1" fill="none" stroke="#8ee6b0" stroke-width="2.4" opacity="0.5" transform="translate(1.2,0)" filter="url(#b1)"/>
<path d="M292.5,45.8 C290.2,45.9 279.8,45.9 278.5,46.5 C277.2,47.1 286.2,48.5 284.5,49.3 C282.8,50.1 269.9,50.3 268.5,51.3 C267.1,52.3 273.4,53.9 276.0,55.5 C278.6,57.1 281.7,58.2 284.0,61.0 C286.3,63.8 284.9,63.4 290.0,72.0 C295.1,80.6 308.3,101.8 314.7,112.4 C321.1,123.0 325.5,129.9 328.2,135.7 C330.9,141.5 332.0,144.9 331.0,147.3 C330.0,149.8 325.8,149.1 322.4,150.4 C319.0,151.7 313.0,151.6 310.8,155.0 C308.5,158.4 308.2,164.7 308.9,170.5 C309.5,176.3 313.4,185.1 314.7,189.9 C316.0,194.7 318.6,195.9 316.6,199.5 C314.6,203.1 306.5,207.6 303.0,211.2 C299.5,214.8 297.9,216.9 295.3,220.8 C292.7,224.7 289.2,229.2 287.6,234.4 C286.0,239.6 287.5,247.3 285.6,251.8 C283.7,256.3 277.0,258.9 276.0,261.5 C275.0,264.1 275.3,263.1 279.8,267.3 C284.3,271.5 294.0,278.9 303.0,286.6 C312.0,294.3 324.3,307.6 334.0,313.7 C343.7,319.8 348.5,320.2 361.1,323.4 C373.7,326.6 401.4,331.5 409.5,333.1" fill="none" stroke="url(#trg)" stroke-width="1.9" stroke-linecap="round" stroke-linejoin="round" opacity="0.85"/>
</svg></div>

<!-- controls -->
<div class="abs" style="left:283px;top:642px;width:10px;height:10px;background:#fff;border-radius:2px"></div>
<div class="abs" style="left:298px;top:642px;font-size:9px;-webkit-text-stroke:.25px currentColor;color:#aab3cb">LIVE</div>
<div class="q" style="left:328px;top:641px">?</div>
<div class="btn" style="left:349px;top:642px;width:41px;height:22px;background:linear-gradient(180deg,#172232,#111a26);border-color:#394455">PLAY</div>
<div class="abs" style="left:398px;top:642px;font-size:9px;-webkit-text-stroke:.25px currentColor;color:#aab3cb">ZOOM</div>
<div class="abs" style="left:432px;top:641px;width:118px;height:13px;border:1px solid #2e2e33;border-radius:7px;background:#141416"></div>
<div class="abs" style="left:438px;top:645px;width:17px;height:17px;border-radius:50%;background:#6a7890;box-shadow:0 0 6px rgba(100,130,200,.45)"></div>
<div class="btn" style="left:558px;top:642px;width:77px;height:22px;background:linear-gradient(180deg,#172232,#111a26);border-color:#394455">RESET VIEW</div>
<div class="abs" style="left:283px;top:675px;font-size:9.5px;color:#aab3cb;letter-spacing:.2px">History</div>
<div class="q" style="left:322px;top:674px">?</div>
<div class="abs" style="left:343px;top:674px;width:543px;height:13px;border:1px solid #2e2e33;border-radius:7px;background:#141416"></div>
<div class="abs" style="left:664px;top:677px;width:17px;height:17px;border-radius:50%;background:#6a7890;box-shadow:0 0 6px rgba(100,130,200,.45)"></div>
<div class="abs" style="left:894px;top:671px;font-size:15px;color:#e6eaf4;letter-spacing:.1px">28/45</div>

<div class="sash" style="left:941px;top:164px;width:1px;height:564px"></div>

<!-- Inspector group -->
<div class="tabbar" style="left:942px;top:164px;width:397px"></div>
<div class="tab" style="left:942px;top:164px;width:79px"><span>Inspector</span><svg class="xic" style="left:59px" viewBox="0 0 9 9"><path d="M0.5 0.5L8.5 8.5M8.5 0.5L0.5 8.5" stroke="#9a9aa0" stroke-width="1"/></svg></div>
<div class="card" style="left:942px;top:192px;width:397px;height:536px"></div>
<div class="itab sel" style="left:949px;width:53px">Run HUD</div>
<div class="itab" style="left:1007px;width:62px">Live Metrics</div>
<div class="itab" style="left:1074px;width:70px">Run Overview</div>
<div class="itab" style="left:1149px;width:47px">Run Diff</div>
<div class="itab" style="left:1200px;width:42px">Config</div>
<div class="itab" style="left:1246px;width:72px">Debug Prompt</div>
<div class="btn" style="left:949px;top:232px;width:57px;height:21px;line-height:19px;background:#121821;border-color:#2a303a;color:#9aa2b2;font-weight:normal">CANCEL</div>
<div class="btn" style="left:1010px;top:232px;width:67px;height:21px;line-height:19px;background:linear-gradient(180deg,#18222e,#121a24);border-color:#333c48">PROMOTE</div>
<div class="divh" style="left:943px;top:260px;width:395px"></div>
<div class="card" style="left:949px;top:267px;width:384px;height:204px;border-color:#2b2d38"></div>
<div class="hdrttl" style="left:958px;top:277px;letter-spacing:.5px">Run HUD</div>
<div class="divh" style="left:950px;top:299px;width:382px"></div>
<div class="abs" style="left:1060px;top:308px;width:264px;height:15px;border:1px solid #3d8a5a;border-radius:8px;font-family:'Liberation Mono',monospace;font-size:8px;color:#69cd8c;text-align:center;line-height:13px;letter-spacing:.5px;-webkit-text-stroke:.3px currentColor">COMPLETED</div>
<div class="hl" style="top:310px">status</div>
<div class="hl" style="top:330px">backend</div><div class="hv" style="top:330px">mlx_qwen3</div>
<div class="hl" style="top:350px">base_model</div><div class="hv" style="top:350px">mlx-community/Qwen3-1.7B-4bit</div>
<div class="hl" style="top:370px">active_path</div><div class="hv" style="top:370px">models/learning-agent-epstein-files-1</div>
<div class="hl" style="top:390px">duration</div><div class="hv" style="top:390px">10.3s</div>
<div class="hl" style="top:410px">step</div><div class="hv" style="top:410px">45</div>
<div class="hl" style="top:430px">epoch</div><div class="hv" style="top:430px">5</div>
<div class="hl" style="top:450px">progress</div><div class="hv" style="top:450px">100%</div>

<div class="sash" style="left:8px;top:728px;width:1331px;height:1px"></div>

<!-- Timeline group -->
<div class="tabbar" style="left:8px;top:729px;width:1331px;height:27px"></div>
<div class="tab" style="left:8px;top:729px;width:108px;height:27px"><span>Timeline + Logs</span><svg class="xic" style="left:90px" viewBox="0 0 9 9"><path d="M0.5 0.5L8.5 8.5M8.5 0.5L0.5 8.5" stroke="#9a9aa0" stroke-width="1"/></svg></div>
<div class="card" style="left:8px;top:756px;width:1331px;height:60px"></div>
<div class="itab sel" style="left:15px;top:767px;width:73px">Event Timeline</div>
<div class="itab" style="left:93px;top:767px;width:35px">Logs</div>
<div class="itab" style="left:132px;top:767px;width:83px">Gradient Descent</div>
<div class="abs" style="left:220px;top:765px;width:978px;height:26px;border:1px solid #2b2e39;border-radius:6px;background:#090d15;font-family:'Liberation Mono',monospace;font-size:9.6px;color:#6c7282;padding-left:7px;line-height:24px">Filter events by type/message</div>
<div class="btn" style="left:1203px;top:769px;width:74px;height:22px;background:linear-gradient(180deg,#18222e,#121a24);border-color:#333c48">DOWNLOAD</div>
<div class="btn" style="left:1282px;top:769px;width:50px;height:22px;background:linear-gradient(180deg,#18222e,#121a24);border-color:#333c48">CLEAR</div>
<div class="abs" style="left:9px;top:798px;width:1329px;height:2px;background:#2c2e36"></div>

</div>
</body></html>
